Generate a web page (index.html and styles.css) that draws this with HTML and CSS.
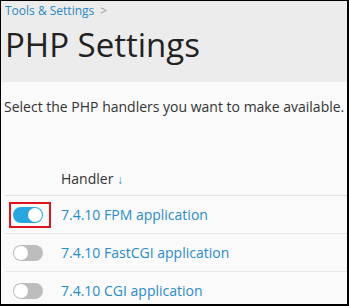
FILE: index.html
```html
<!DOCTYPE html>
<html>
<head>
<meta charset="utf-8">
<link rel="stylesheet" href="styles.css">
</head>
<body>
<div class="frame">
  <header class="page-header">
    <div class="breadcrumb"><a class="crumb" href="#">Tools &amp; Settings</a><span class="sep">&gt;</span></div>
    <h1 class="title">PHP Settings</h1>
  </header>
  <main class="content">
    <p class="intro">Select the PHP handlers you want to make available.</p>
    <div class="table">
      <div class="row head">
        <div class="cell-toggle"></div>
        <div class="cell-name">Handler <span class="sort">&#8595;</span></div>
      </div>
      <div class="row">
        <div class="cell-toggle"><span class="highlight"><span class="toggle on"></span></span></div>
        <div class="cell-name"><a href="#">7.4.10 FPM application</a></div>
      </div>
      <div class="row">
        <div class="cell-toggle"><span class="toggle"></span></div>
        <div class="cell-name"><a href="#">7.4.10 FastCGI application</a></div>
      </div>
      <div class="row">
        <div class="cell-toggle"><span class="toggle"></span></div>
        <div class="cell-name"><a href="#">7.4.10 CGI application</a></div>
      </div>
    </div>
  </main>
</div>
</body>
</html>
```
FILE: styles.css
```css
html, body {
  margin: 0;
  padding: 0;
}
body {
  font-family: "Open Sans", "Liberation Sans", sans-serif;
  color: #222;
}
.frame {
  box-sizing: border-box;
  width: 349px;
  height: 306px;
  border-style: solid;
  border-color: #000;
  border-width: 1px 2px 2px 1px;
  background: #fafafa;
  overflow: hidden;
  display: flex;
  flex-direction: column;
}
.page-header {
  flex-shrink: 0;
  background: #ececec;
  padding: 1px 0 0 4px;
  height: 81px;
  box-sizing: border-box;
}
.breadcrumb {
  font-size: 12px;
  line-height: 17px;
  display: flex;
  align-items: center;
  gap: 6px;
}
.crumb {
  color: #2b87c3;
  text-decoration: none;
}
.sep {
  color: #999;
  font-size: 12px;
}
.title {
  margin: 5px 0 0 0;
  font-size: 33px;
  font-weight: 400;
  line-height: 42px;
  color: #222;
}
.content {
  flex-shrink: 0;
  padding: 0 0 0 3px;
}
.intro {
  margin: 14px 0 0 0;
  font-size: 14px;
  line-height: 22px;
  color: #333;
  white-space: nowrap;
}
.table {
  margin-top: 44px;
  margin-left: 1px;
}
.row {
  display: flex;
  align-items: center;
  height: 37px;
  border-bottom: 1px solid #e6e6e6;
}
.row.head {
  height: 33px;
  border-bottom: 1px solid #e0e0e0;
}
.cell-toggle {
  width: 56px;
  display: flex;
  align-items: center;
  padding-left: 8px;
  box-sizing: border-box;
}
.cell-name {
  font-size: 14px;
  color: #333;
}
.cell-name a {
  color: #2b8ac8;
  text-decoration: none;
}
.sort {
  color: #2b8ac8;
  font-size: 12px;
}
.highlight {
  display: inline-flex;
  margin: -5px -8px -5px -4px;
  padding: 3px 6px 3px 2px;
  border: 2px solid #e0141e;
}
.toggle {
  position: relative;
  display: inline-block;
  width: 30px;
  height: 16px;
  border-radius: 8px;
  background: #bdbdbd;
}
.toggle::after {
  content: "";
  position: absolute;
  top: 1px;
  left: 1px;
  width: 14px;
  height: 14px;
  border-radius: 50%;
  background: #fff;
}
.toggle.on {
  background: #28a6df;
}
.toggle.on::after {
  left: 15px;
}
```
